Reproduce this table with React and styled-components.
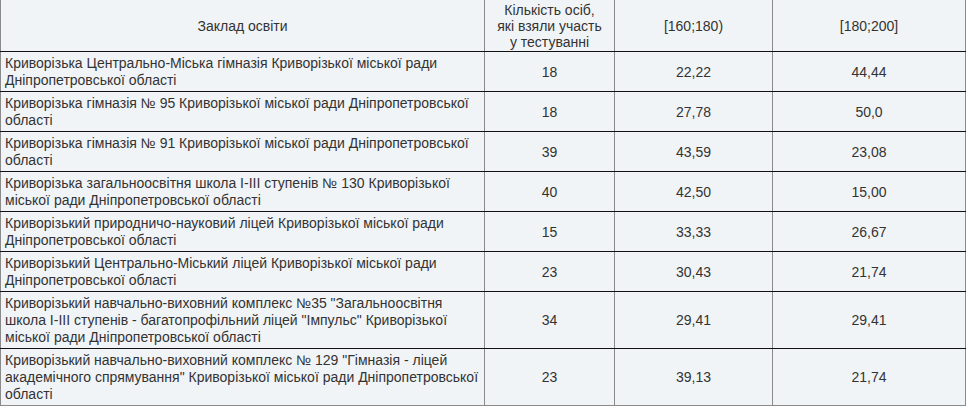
import styled, { createGlobalStyle } from "styled-components";

const GlobalStyle = createGlobalStyle`
  body {
    margin: 0;
    background: #ffffff;
    font-family: "Liberation Sans", Arial, sans-serif;
  }
`;

const Table = styled.table`
  width: 965px;
  border-collapse: collapse;
  table-layout: fixed;
  background: #f1f4f7;
  color: #333;
  font-size: 14px;
`;

const HeadCell = styled.th`
  font-weight: normal;
  text-align: center;
  vertical-align: middle;
  line-height: 16px;
  padding: 2px 4px 1px;
  border-left: 1px solid #8a8a8a;
  border-right: 1px solid #8a8a8a;
  border-bottom: 1px solid #111;
`;

const Cell = styled.td`
  text-align: ${(p) => (p.$left ? "left" : "center")};
  vertical-align: middle;
  line-height: 17px;
  padding: 3px 4px 2px;
  border-left: 1px solid #8a8a8a;
  border-right: 1px solid #8a8a8a;
  border-bottom: 1px solid ${(p) => (p.$last ? "#8a8a8a" : "#111")};
`;

const rows = [
  ["Криворізька Центрально-Міська гімназія Криворізької міської ради Дніпропетровської області", "18", "22,22", "44,44"],
  ["Криворізька гімназія № 95 Криворізької міської ради Дніпропетровської області", "18", "27,78", "50,0"],
  ["Криворізька гімназія № 91 Криворізької міської ради Дніпропетровської області", "39", "43,59", "23,08"],
  ["Криворізька загальноосвітня школа I-III ступенів № 130 Криворізької міської ради Дніпропетровської області", "40", "42,50", "15,00"],
  ["Криворізький природничо-науковий ліцей Криворізької міської ради Дніпропетровської області", "15", "33,33", "26,67"],
  ["Криворізький Центрально-Міський ліцей Криворізької міської ради Дніпропетровської області", "23", "30,43", "21,74"],
  ["Криворізький навчально-виховний комплекс №35 \"Загальноосвітня школа I-III ступенів - багатопрофільний ліцей \"Імпульс\" Криворізької міської ради Дніпропетровської області", "34", "29,41", "29,41"],
  ["Криворізький навчально-виховний комплекс № 129 \"Гімназія - ліцей академічного спрямування\" Криворізької міської ради Дніпропетровської області", "23", "39,13", "21,74"],
];

export default function App() {
  return (
    <>
      <GlobalStyle />
      <Table>
        <colgroup>
          <col style={{ width: 484 }} />
          <col style={{ width: 130 }} />
          <col style={{ width: 158 }} />
          <col style={{ width: 193 }} />
        </colgroup>
        <thead>
          <tr>
            <HeadCell>Заклад освіти</HeadCell>
            <HeadCell>
              Кількість осіб,
              <br />
              які взяли участь
              <br />
              у тестуванні
            </HeadCell>
            <HeadCell>[160;180)</HeadCell>
            <HeadCell>[180;200]</HeadCell>
          </tr>
        </thead>
        <tbody>
          {rows.map((r, i) => {
            const last = i === rows.length - 1;
            return (
              <tr key={i}>
                <Cell $left $last={last}>{r[0]}</Cell>
                <Cell $last={last}>{r[1]}</Cell>
                <Cell $last={last}>{r[2]}</Cell>
                <Cell $last={last}>{r[3]}</Cell>
              </tr>
            );
          })}
        </tbody>
      </Table>
    </>
  );
}
